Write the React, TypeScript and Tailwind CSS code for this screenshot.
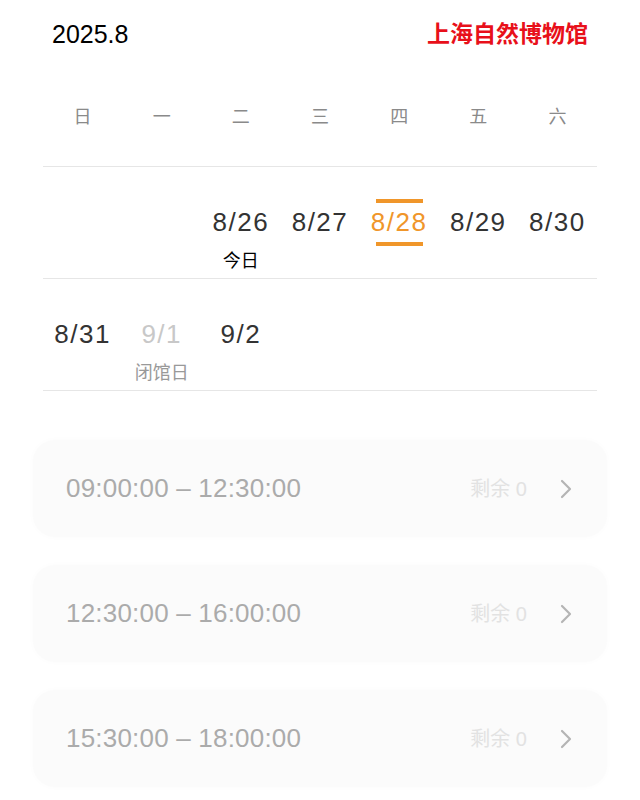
import React from "react";

type Cell = { date?: string; label?: string; selected?: boolean; closed?: boolean };

const weekdays = ["日", "一", "二", "三", "四", "五", "六"];

const weeks: Cell[][] = [
  [{}, {}, { date: "8/26", label: "今日" }, { date: "8/27" }, { date: "8/28", selected: true }, { date: "8/29" }, { date: "8/30" }],
  [{ date: "8/31" }, { date: "9/1", label: "闭馆日", closed: true }, { date: "9/2" }, {}, {}, {}, {}],
];

const slots = ["09:00:00 – 12:30:00", "12:30:00 – 16:00:00", "15:30:00 – 18:00:00"];

const font = { fontFamily: '"Liberation Sans", "Noto Sans CJK SC", sans-serif' };

function DayCell({ cell }: { cell: Cell }) {
  const bar = cell.selected ? "bg-[#f0962a]" : "bg-transparent";
  const color = cell.selected ? "text-[#f0962a]" : cell.closed ? "text-[#c8c8c8]" : "text-[#333333]";
  return (
    <div className="flex flex-col items-center">
      <div className={`h-[4px] w-[47px] ${bar}`} />
      <div className={`mt-[4px] h-[30px] text-[26px] leading-[30px] tracking-[1.5px] ${color}`}>{cell.date ?? ""}</div>
      <div className={`mt-[5px] h-[4px] w-[47px] ${bar}`} />
      <div className={`mt-[5px] h-[20px] text-[18px] leading-[20px] ${cell.closed ? "text-[#999999]" : "text-black"}`}>
        {cell.label ?? ""}
      </div>
    </div>
  );
}

export default function App() {
  return (
    <div className="min-h-[800px] w-[640px] bg-white" style={font}>
      {/* header */}
      <div className="flex items-center justify-between pl-[52px] pr-[52px] pt-[20px]">
        <span className="text-[25px] leading-[28px] text-black">2025.8</span>
        <span className="text-[23px] leading-[28px] font-bold text-[#e8101a]">上海自然博物馆</span>
      </div>

      {/* calendar */}
      <div className="mx-[43px]">
        <div className="grid grid-cols-7 pt-[59px] pb-[39px]">
          {weekdays.map((w) => (
            <div key={w} className="text-center text-[18px] leading-[20px] text-[#8a8a8a]">
              {w}
            </div>
          ))}
        </div>
        {weeks.map((week, i) => (
          <div key={i} className="grid grid-cols-7 border-t border-[#e6e6e6] pt-[32px] pb-[7px]">
            {week.map((c, j) => (
              <DayCell key={j} cell={c} />
            ))}
          </div>
        ))}
        <div className="border-t border-[#e6e6e6]" />
      </div>

      {/* time slots */}
      <div className="mx-[33px] mt-[49px] flex flex-col gap-[28px]">
        {slots.map((s) => (
          <div
            key={s}
            className="flex h-[97px] items-center rounded-[22px] bg-[#fbfbfb] pl-[33px] pr-[34px] shadow-[0_0_6px_rgba(0,0,0,0.02)]"
          >
            <span className="flex-1 text-[26px] tracking-[0.2px] text-[#ababab]">{s}</span>
            <span className="mr-[32px] text-[20px] text-[#e2e2e2]">剩余 0</span>
            <svg width="14" height="20" viewBox="0 0 14 20" fill="none">
              <path d="M3 2 L11 10 L3 18" stroke="#b4b4b4" strokeWidth="2.2" strokeLinecap="round" strokeLinejoin="round" />
            </svg>
          </div>
        ))}
      </div>
    </div>
  );
}
